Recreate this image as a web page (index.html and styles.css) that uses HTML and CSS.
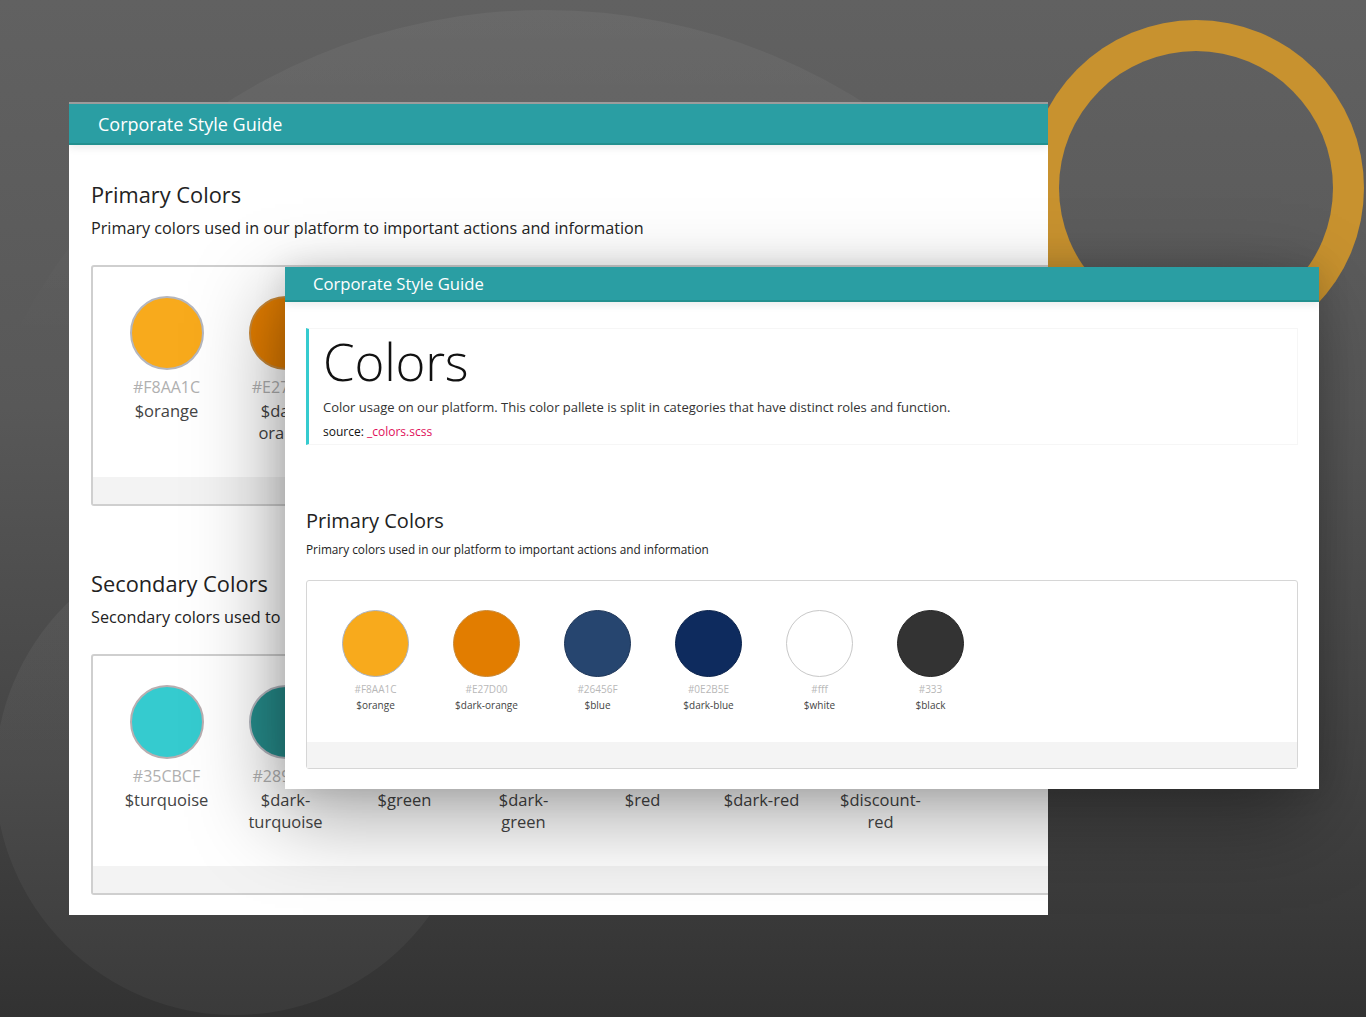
FILE: index.html
```html
<!DOCTYPE html>
<html lang="en">
<head>
<meta charset="utf-8">
<title>Corporate Style Guide</title>
<link rel="stylesheet" href="styles.css">
</head>
<body>
<div class="scene">
  <div class="bg-circle bg-circle-top"></div>
  <div class="bg-circle bg-circle-bottom"></div>
  <div class="ring"></div>

  <section class="win win-back">
    <header class="win-head"><span class="win-title">Corporate Style Guide</span></header>
    <div class="back-body">
      <h2 class="b-h2 b-h2-first">Primary Colors</h2>
      <p class="b-desc">Primary colors used in our platform to important actions and information</p>
      <div class="b-box">
        <div class="b-row">
          <div class="b-item"><div class="b-dot c-orange"></div><div class="b-hex">#F8AA1C</div><div class="b-name">$orange</div></div>
          <div class="b-item"><div class="b-dot c-dorange"></div><div class="b-hex">#E27D00</div><div class="b-name">$dark-orange</div></div>
        </div>
        <div class="b-band"></div>
      </div>

      <h2 class="b-h2 b-h2-second">Secondary Colors</h2>
      <p class="b-desc">Secondary colors used to highlight information</p>
      <div class="b-box">
        <div class="b-row">
          <div class="b-item"><div class="b-dot c-turq"></div><div class="b-hex">#35CBCF</div><div class="b-name">$turquoise</div></div>
          <div class="b-item"><div class="b-dot c-dturq"></div><div class="b-hex">#289E9A</div><div class="b-name">$dark-turquoise</div></div>
          <div class="b-item"><div class="b-dot c-green"></div><div class="b-hex">#7DC142</div><div class="b-name">$green</div></div>
          <div class="b-item"><div class="b-dot c-dgreen"></div><div class="b-hex">#4E8A2A</div><div class="b-name">$dark-green</div></div>
          <div class="b-item"><div class="b-dot c-red"></div><div class="b-hex">#E0105A</div><div class="b-name">$red</div></div>
          <div class="b-item"><div class="b-dot c-dred"></div><div class="b-hex">#A8093F</div><div class="b-name">$dark-red</div></div>
          <div class="b-item"><div class="b-dot c-dred"></div><div class="b-hex">#D0021B</div><div class="b-name">$discount-red</div></div>
        </div>
        <div class="b-band"></div>
      </div>
    </div>
  </section>

  <section class="win win-front">
    <header class="win-head front-head"><span class="win-title front-title">Corporate Style Guide</span></header>
    <div class="front-body">
      <div class="intro">
        <h1 class="intro-title">Colors</h1>
        <p class="intro-desc">Color usage on our platform. This color pallete is split in categories that have distinct roles and function.</p>
        <p class="intro-src">source: <a class="src-link" href="#">_colors.scss</a></p>
      </div>

      <h2 class="f-h2">Primary Colors</h2>
      <p class="f-desc">Primary colors used in our platform to important actions and information</p>
      <div class="f-box">
        <div class="f-row">
          <div class="f-item"><div class="f-dot c-orange"></div><div class="f-hex">#F8AA1C</div><div class="f-name">$orange</div></div>
          <div class="f-item"><div class="f-dot c-dorange"></div><div class="f-hex">#E27D00</div><div class="f-name">$dark-orange</div></div>
          <div class="f-item"><div class="f-dot c-blue"></div><div class="f-hex">#26456F</div><div class="f-name">$blue</div></div>
          <div class="f-item"><div class="f-dot c-dblue"></div><div class="f-hex">#0E2B5E</div><div class="f-name">$dark-blue</div></div>
          <div class="f-item"><div class="f-dot c-white"></div><div class="f-hex">#fff</div><div class="f-name">$white</div></div>
          <div class="f-item"><div class="f-dot c-black"></div><div class="f-hex">#333</div><div class="f-name">$black</div></div>
        </div>
        <div class="f-band"></div>
      </div>
    </div>
  </section>
</div>
</body>
</html>
```

FILE: styles.css
```css
* { box-sizing: border-box; }
html, body { margin: 0; padding: 0; }
body { font-family: "Open Sans", "Liberation Sans", sans-serif; }

.scene {
  position: relative;
  width: 1366px;
  height: 1017px;
  overflow: hidden;
  background: linear-gradient(180deg, #616161 0%, #585858 40%, #444444 75%, #323232 100%);
}

.bg-circle { position: absolute; border-radius: 50%; }
.bg-circle-top {
  left: -50px; top: 10px; width: 1190px; height: 1190px;
  background: linear-gradient(180deg, rgba(255,255,255,0.05) 0%, rgba(255,255,255,0.03) 12%, rgba(255,255,255,0) 28%);
}
.bg-circle-bottom {
  left: -5px; top: 535px; width: 480px; height: 480px;
  background: linear-gradient(180deg, rgba(255,255,255,0.05), rgba(255,255,255,0.04));
}

.ring {
  position: absolute;
  left: 1028px; top: 20px;
  width: 336px; height: 336px;
  border-radius: 50%;
  border: 31px solid #c8922f;
  border-bottom-color: #c08a2b;
}

.win { position: absolute; background: #fff; overflow: hidden; }
.win-back {
  left: 69px; top: 102px; width: 979px; height: 813px;
  border-top: 2px solid #9c9c9c;
}
.win-front {
  left: 285px; top: 267px; width: 1034px; height: 522px;
  box-shadow: -10px 28px 80px rgba(0,0,0,0.35), 0 0 30px rgba(0,0,0,0.12);
}

.win-head {
  height: 41px;
  background: #2a9ea3;
  border-bottom: 2px solid #23908f;
  display: flex; align-items: center;
  padding-left: 29px;
  box-shadow: 0 3px 8px rgba(0,0,0,0.08);
  position: relative;
}
.win-title { color: #fff; font-size: 18px; }
.front-head { height: 35px; padding-left: 28px; }
.front-title { font-size: 16.7px; }

/* back window body */
.back-body { padding: 0 0 0 22px; }
.b-h2 { margin: 0; font-weight: 400; font-size: 21.8px; color: #222; line-height: 30px; }
.b-h2-first { margin-top: 35px; }
.b-h2-second { margin-top: 63px; }
.b-desc { margin: 6px 0 0; font-size: 16.2px; color: #222; line-height: 24px; }
.b-box {
  margin-top: 25px;
  margin-right: -30px;
  border: 2px solid #cfcfcf;
  border-radius: 3px;
  height: 241px;
  display: flex; flex-direction: column;
}
.b-row { display: flex; padding: 29px 0 0 14px; flex: 1; }
.b-item { width: 119px; display: flex; flex-direction: column; align-items: center; text-align: center; padding: 0 15px; }
.b-dot { width: 74px; height: 74px; border-radius: 50%; border: 2px solid #b4b6be; flex: none; }
.b-hex { margin-top: 6px; font-size: 16px; line-height: 22px; color: #b0b0b0; }
.b-name { margin-top: 2px; font-size: 16.5px; line-height: 22px; color: #444; }
.b-band { height: 27px; background: #f3f3f3; flex: none; }

/* front window body */
.front-body { padding: 26px 21px 0 21px; }
.intro {
  height: 117px;
  border: 1px solid #f6f6f6;
  border-left: 3px solid #35cbcf;
  padding: 0 0 0 14px;
}
.intro-title { margin: 0; font-weight: 300; font-size: 51px; line-height: 64px; color: #111; letter-spacing: -0.2px; }
.intro-desc { margin: 4px 0 0; font-size: 13px; line-height: 20px; color: #333; }
.intro-src { margin: 6px 0 0; font-size: 12px; line-height: 18px; color: #111; }
.src-link { color: #e0105a; text-decoration: none; }

.f-h2 { margin: 62px 0 0; font-weight: 400; font-size: 20px; line-height: 28px; color: #222; }
.f-desc { margin: 5px 0 0; font-size: 11.8px; line-height: 18px; color: #222; }
.f-box {
  margin-top: 22px;
  border: 1px solid #d6d6d6;
  border-radius: 3px;
  height: 189px;
  display: flex; flex-direction: column;
}
.f-row { display: flex; padding: 29px 0 0 13px; flex: 1; }
.f-item { width: 111px; display: flex; flex-direction: column; align-items: center; text-align: center; }
.f-dot { width: 67px; height: 67px; border-radius: 50%; border: 1px solid #a9b3c4; flex: none; }
.f-hex { margin-top: 5px; font-size: 10px; line-height: 14px; color: #b8b8b8; }
.f-name { margin-top: 1px; font-size: 10px; line-height: 16px; color: #444; }
.f-band { height: 26px; background: #f4f4f4; flex: none; }

.c-orange { background: #f8aa1c; }
.c-dorange { background: #e27d00; border-color: #c98a3a; }
.c-blue { background: #26456f; border-color: #1e3659; }
.c-dblue { background: #0e2b5e; border-color: #0b234c; }
.c-white { background: #fff; border-color: #c8c8c8; }
.c-black { background: #333; border-color: #262626; }
.c-turq { background: #35cbcf; border-color: #b9aeb0; }
.c-dturq { background: #268c8b; }
.c-green { background: #7dc142; }
.c-dgreen { background: #4e8a2a; }
.c-red { background: #e0105a; }
.c-dred { background: #a8093f; }
```
